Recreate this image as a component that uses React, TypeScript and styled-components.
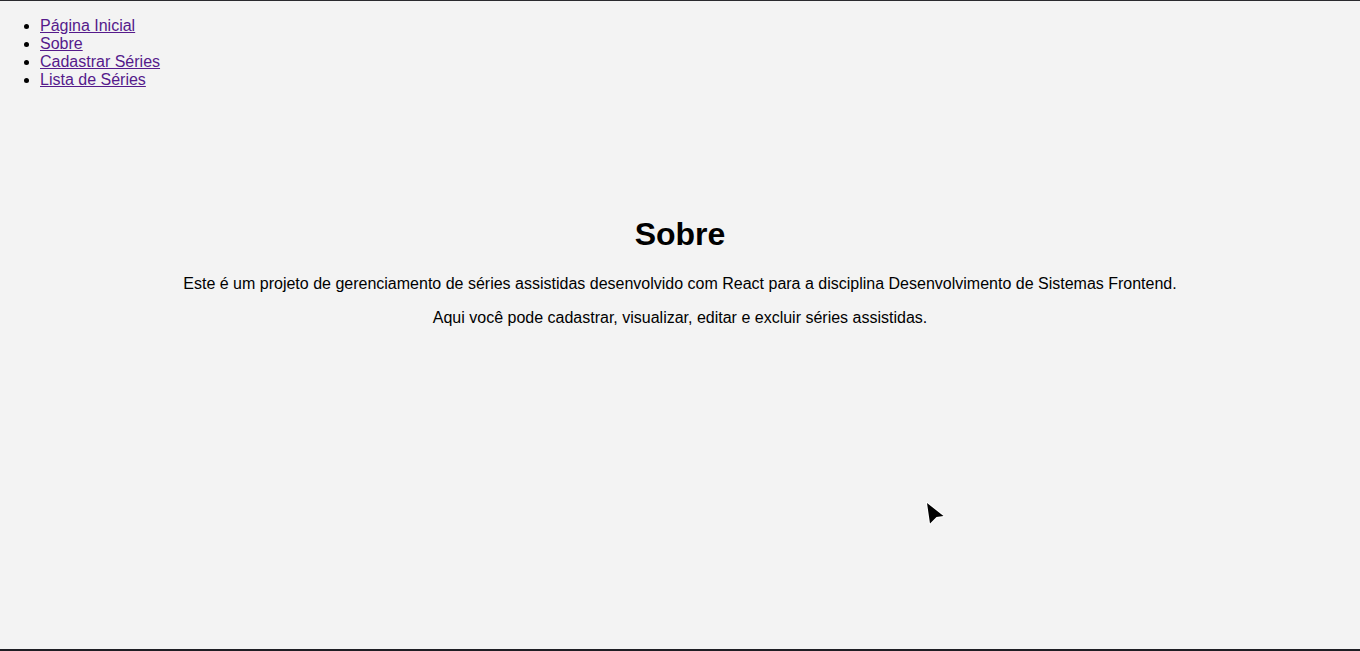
import styled, { createGlobalStyle } from 'styled-components'

const GlobalStyle = createGlobalStyle`
  html, body {
    margin: 0;
    padding: 0;
    background: #f3f3f3;
    font-family: "Liberation Sans", Arial, sans-serif;
    color: #000;
  }
`

const Shell = styled.div`
  position: relative;
  box-sizing: border-box;
  height: 651px;
  overflow: hidden;
  border-top: 1px solid #2a2a2e;
  border-bottom: 2px solid #1e1e24;
  background: #f3f3f3;
`

const NavList = styled.ul`
  margin: 16px 0;
  padding-left: 40px;
  font-size: 16px;
  line-height: 18px;
`

const NavLink = styled.a`
  color: #551a8b;
  text-decoration: underline;
`

const Content = styled.main`
  padding-top: 90px;
  text-align: center;
`

const Title = styled.h1`
  font-size: 32px;
  font-weight: bold;
  margin: 21px 0 22px;
`

const Text = styled.p`
  font-size: 16px;
  line-height: 18px;
  margin: 16px 0;
`

const Cursor = styled.svg`
  position: absolute;
  left: 924px;
  top: 499px;
`

const links = ['Página Inicial', 'Sobre', 'Cadastrar Séries', 'Lista de Séries']

export default function App() {
  return (
    <>
      <GlobalStyle />
      <Shell>
        <nav>
          <NavList>
            {links.map((l) => (
              <li key={l}>
                <NavLink href="#">{l}</NavLink>
              </li>
            ))}
          </NavList>
        </nav>
        <Content>
          <Title>Sobre</Title>
          <Text>
            Este é um projeto de gerenciamento de séries assistidas desenvolvido com React para a disciplina Desenvolvimento de Sistemas Frontend.
          </Text>
          <Text>Aqui você pode cadastrar, visualizar, editar e excluir séries assistidas.</Text>
        </Content>
        <Cursor width="26" height="28" viewBox="0 0 26 28">
          <path
            d="M3 3 L19.5 16 L12.5 17 L6 23.5 Z"
            fill="#000"
            stroke="#fff"
            strokeWidth="2"
            strokeLinejoin="round"
            style={{ paintOrder: 'stroke' }}
          />
        </Cursor>
      </Shell>
    </>
  )
}
